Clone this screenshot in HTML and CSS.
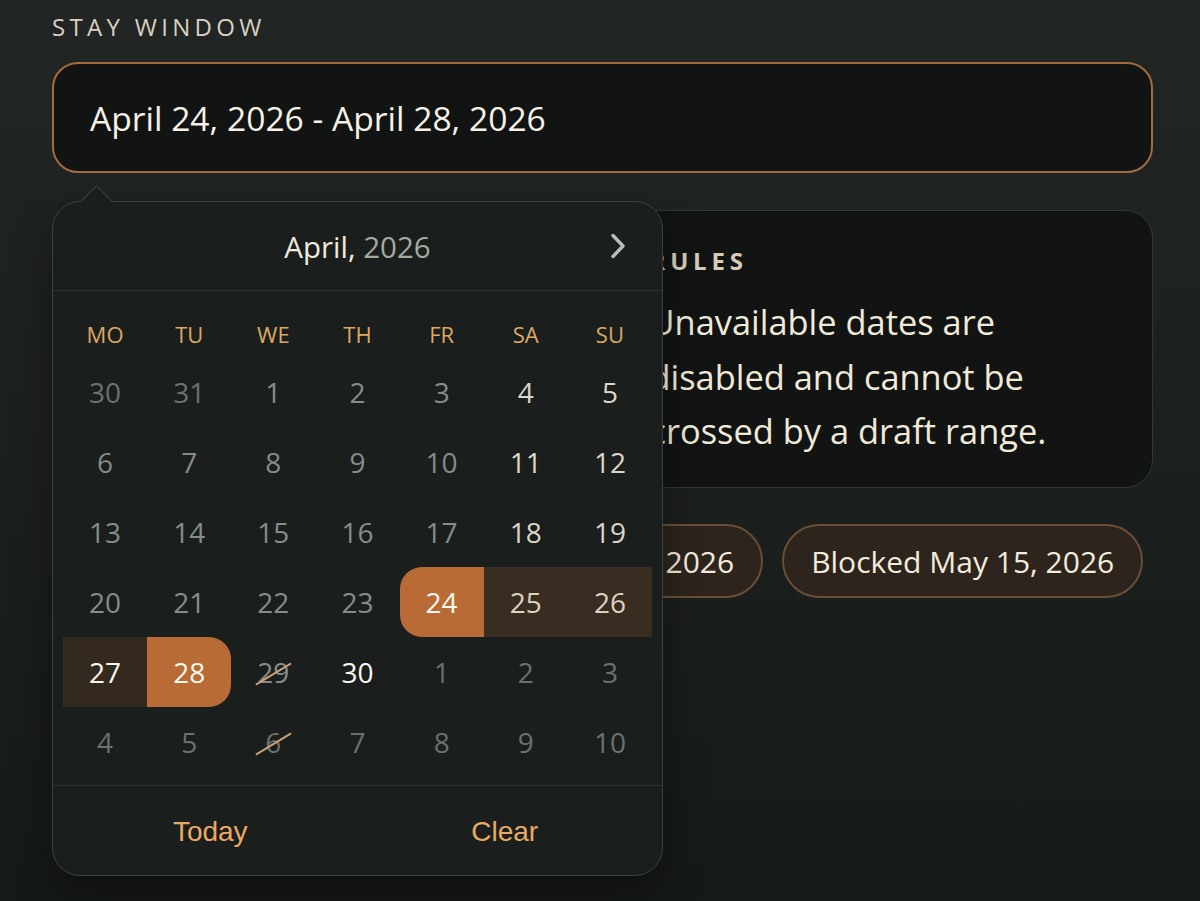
FILE: index.html
```html
<!DOCTYPE html>
<html lang="en">
<head>
<meta charset="utf-8">
<title>Stay window</title>
<link rel="stylesheet" href="styles.css">
</head>
<body>
<main class="page">
  <label class="label" for="stay">STAY WINDOW</label>
  <div class="field">
    <div class="input" id="stay">April 24, 2026 - April 28, 2026</div>

    <div class="picker">
      <div class="picker-head">
        <span></span>
        <div class="title"><span class="month">April,</span> <span class="year">2026</span></div>
        <button class="next" aria-label="Next month">
          <svg width="22" height="28" viewBox="0 0 22 28"><path d="M6 3.5 L16 14 L6 24.5" fill="none" stroke="#b7bfb4" stroke-width="3.4" stroke-linecap="round" stroke-linejoin="round"/></svg>
        </button>
      </div>
      <div class="grid">
        <span class="wd">MO</span><span class="wd">TU</span><span class="wd">WE</span><span class="wd">TH</span><span class="wd">FR</span><span class="wd">SA</span><span class="wd">SU</span>

        <span class="d out">30</span><span class="d out">31</span><span class="d off">1</span><span class="d off">2</span><span class="d off">3</span><span class="d on">4</span><span class="d on">5</span>
        <span class="d off">6</span><span class="d off">7</span><span class="d off">8</span><span class="d off">9</span><span class="d off">10</span><span class="d on">11</span><span class="d on">12</span>
        <span class="d off">13</span><span class="d off">14</span><span class="d off">15</span><span class="d off">16</span><span class="d off">17</span><span class="d on">18</span><span class="d on">19</span>
        <span class="d off">20</span><span class="d off">21</span><span class="d off">22</span><span class="d off">23</span><span class="d start">24</span><span class="d mid">25</span><span class="d mid">26</span>
        <span class="d mid strong">27</span><span class="d end">28</span><span class="d blocked"><span class="num">29</span></span><span class="d today">30</span><span class="d out">1</span><span class="d out">2</span><span class="d out">3</span>
        <span class="d out">4</span><span class="d out">5</span><span class="d out blocked"><span class="num">6</span></span><span class="d out">7</span><span class="d out">8</span><span class="d out">9</span><span class="d out">10</span>
      </div>
      <div class="picker-foot">
        <button class="link">Today</button>
        <button class="link">Clear</button>
      </div>
    </div>
  </div>

  <section class="below">
    <div class="spacer"></div>
    <div class="card">
      <h3 class="card-title">RULES</h3>
      <p class="card-text">Unavailable dates are disabled and cannot be crossed by a draft range.</p>
    </div>
  </section>

  <div class="chips">
    <span class="chip">Blocked April 29, 2026</span>
    <span class="chip">Blocked May 15, 2026</span>
  </div>
</main>
</body>
</html>
```

FILE: styles.css
```css
* { box-sizing: border-box; }

html, body {
  margin: 0;
  height: 100%;
}

body {
  background: linear-gradient(180deg, #212523 0%, #1b1f1e 55%, #151918 100%);
  font-family: "Open Sans", "Noto Sans", sans-serif;
  color: #f1e9da;
  overflow: hidden;
}

.page {
  padding: 10px 47px 0 52px;
}

.label {
  display: block;
  font-size: 24px;
  letter-spacing: 4.3px;
  color: #d9d0c1;
  line-height: 34px;
  margin-bottom: 18px;
}

.field {
  position: relative;
}

.input {
  height: 111px;
  border: 2px solid #a26b3d;
  border-radius: 26px;
  background: #111413;
  padding: 0 36px;
  display: flex;
  align-items: center;
  font-size: 33.6px;
  color: #f7f1e6;
}

/* ---------- picker ---------- */
.picker {
  position: absolute;
  left: 0;
  top: 139px;
  width: 611px;
  height: 675px;
  background: #1a1e1d;
  border: 1.5px solid #3c4240;
  border-radius: 28px;
  z-index: 2;
  box-shadow: 0 18px 40px rgba(0, 0, 0, 0.35);
  display: flex;
  flex-direction: column;
}

.picker::before {
  content: "";
  position: absolute;
  left: 32px;
  top: -12px;
  width: 22px;
  height: 22px;
  background: #1a1e1d;
  border-top: 1.5px solid #3c4240;
  border-left: 1.5px solid #3c4240;
  transform: rotate(45deg);
}

.picker-head {
  height: 89px;
  display: grid;
  grid-template-columns: 90px 1fr 90px;
  align-items: center;
  border-bottom: 1.5px solid #2f3432;
}

.title {
  text-align: center;
  font-size: 29.5px;
}

.month { color: #f2ead9; }
.year { color: #a2ab9f; }

.next {
  justify-self: center;
  background: none;
  border: 0;
  padding: 0 0 0 2px;
  display: flex;
  cursor: pointer;
}

.grid {
  display: grid;
  grid-template-columns: repeat(7, 1fr);
  grid-template-rows: 46px repeat(6, 70px);
  padding: 20px 10px 8px;
  border-bottom: 1.5px solid #2f3432;
}

.wd {
  display: flex;
  align-items: center;
  justify-content: center;
  font-size: 22px;
  color: #dea860;
}

.d {
  display: flex;
  align-items: center;
  justify-content: center;
  font-size: 28px;
  color: #858e89;
}

.d.out { color: #69726d; }
.d.off { color: #848d88; }
.d.on { color: #ddd5c7; }
.d.today { color: #fbf6ec; }

.d.start, .d.end {
  background: #b86b35;
  color: #fff8ee;
}
.d.start { border-radius: 22px 0 0 22px; }
.d.end { border-radius: 0 22px 22px 0; }

.d.mid {
  background: #392d21;
  color: #ddd2bf;
}
.d.mid.strong { color: #fbf5ea; background: #33291f; }

.d.blocked .num {
  position: relative;
  display: inline-block;
}

.d.blocked .num::after {
  content: "";
  position: absolute;
  left: 50%;
  width: 41px;
  margin-left: -20px;
  top: 52%;
  height: 2px;
  background: #c7a078;
  transform: rotate(-31deg);
}

.picker-foot {
  flex: 1;
  display: grid;
  grid-template-columns: 1fr 1fr;
  padding: 2px 10px 0;
}

.link {
  background: none;
  border: 0;
  font-family: "Liberation Sans", Arial, sans-serif;
  font-size: 28px;
  color: #eaa962;
  cursor: pointer;
}

/* ---------- below ---------- */
.below {
  display: grid;
  grid-template-columns: 1fr 1fr;
  gap: 24px;
  margin-top: 37px;
}

.card {
  background: #111413;
  border: 1.5px solid #323735;
  border-radius: 28px;
  padding: 35px 50px 28px 34px;
  height: 278px;
}

.card-title {
  margin: 0 0 19px;
  font-size: 24px;
  font-weight: 700;
  letter-spacing: 4.8px;
  color: #d8ccb7;
  line-height: 30px;
}

.card-text {
  margin: 0;
  font-size: 34.4px;
  line-height: 54.5px;
  color: #f2ead9;
}

.chips {
  display: flex;
  gap: 19px;
  margin-top: 36px;
  padding-left: 344px;
}

.chip {
  display: inline-flex;
  align-items: center;
  height: 74px;
  padding: 0 27px;
  border: 2px solid #6a4f35;
  border-radius: 37px;
  background: #2d251d;
  font-size: 30px;
  color: #f3ebdc;
  white-space: nowrap;
}
```
